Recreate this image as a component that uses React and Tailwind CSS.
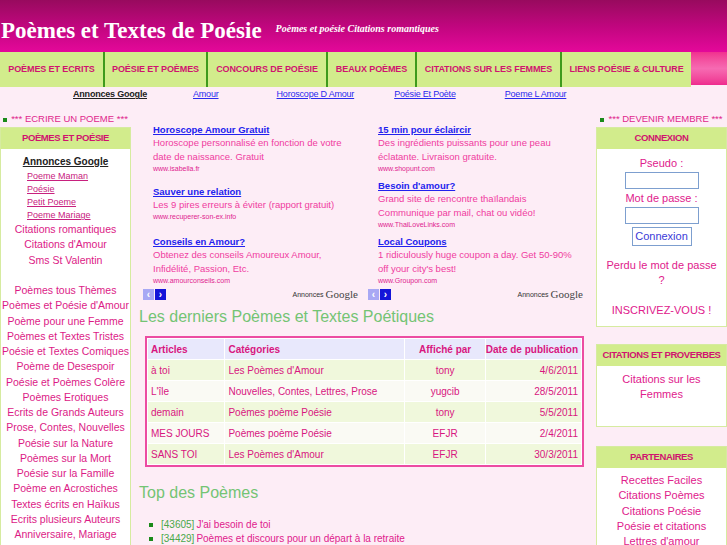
import React from "react";

const pink = "text-[#dc1a86]";

function Box({ title, children, className = "" }) {
  return (
    <div className={"border border-[#d6eba0] bg-white " + className}>
      <div className="h-[21px] bg-[#d2ec8c] flex items-center justify-center text-[9.5px] font-bold text-[#d0136f] tracking-[-0.4px] whitespace-nowrap">
        {title}
      </div>
      {children}
    </div>
  );
}

function Ad({ title, lines, url, mb }) {
  return (
    <div style={{ marginBottom: mb }}>
      <div className="text-[9.5px] font-bold text-[#2222ee] underline leading-[13px]">{title}</div>
      {lines.map((l, i) => (
        <div key={i} className="text-[9.5px] text-[#f03ca0] leading-[14px] whitespace-nowrap">{l}</div>
      ))}
      <div className="text-[7px] text-[#e0248f] leading-[9px]">{url}</div>
    </div>
  );
}

function AdUnit({ ads }) {
  return (
    <div className="w-[228px] flex flex-col">
      <div className="pl-[12px] pt-[11px] h-[177px]">
        {ads.map((a, i) => (
          <Ad key={i} {...a} />
        ))}
      </div>
      <div className="flex items-center justify-between pl-[2px] pr-[8px]">
        <div className="flex gap-[1px]">
          <div className="w-[11px] h-[11px] bg-[#a8a8f4] text-white text-[10px] font-bold flex items-center justify-center leading-none">‹</div>
          <div className="w-[11px] h-[11px] bg-[#1414d8] text-white text-[10px] font-bold flex items-center justify-center leading-none">›</div>
        </div>
        <div className="flex items-end gap-[2px]">
          <span className="text-[7px] text-[#333]">Annonces</span>
          <span className="text-[11px] text-[#444] font-['Liberation_Serif'] leading-[11px]">Google</span>
        </div>
      </div>
    </div>
  );
}

export default function App() {
  const nav = [
    ["POÈMES ET ECRITS", 103],
    ["POÉSIE ET POÈMES", 103],
    ["CONCOURS DE POÉSIE", 120],
    ["BEAUX POÈMES", 89],
    ["CITATIONS SUR LES FEMMES", 145],
    ["LIENS POÉSIE & CULTURE", 131],
  ];
  const leftLinks1 = ["Citations romantiques", "Citations d'Amour", "Sms St Valentin"];
  const leftLinks2 = [
    "Poèmes tous Thèmes",
    "Poèmes et Poésie d'Amour",
    "Poème pour une Femme",
    "Poèmes et Textes Tristes",
    "Poésie et Textes Comiques",
    "Poème de Desespoir",
    "Poésie et Poèmes Colère",
    "Poèmes Erotiques",
    "Ecrits de Grands Auteurs",
    "Prose, Contes, Nouvelles",
    "Poésie sur la Nature",
    "Poèmes sur la Mort",
    "Poésie sur la Famille",
    "Poème en Acrostiches",
    "Textes écrits en Haïkus",
    "Ecrits plusieurs Auteurs",
    "Anniversaire, Mariage",
  ];
  const rows = [
    ["à toi", "Les Poèmes d'Amour", "tony", "4/6/2011"],
    ["L'île", "Nouvelles, Contes, Lettres, Prose", "yugcib", "28/5/2011"],
    ["demain", "Poèmes poème Poésie", "tony", "5/5/2011"],
    ["MES JOURS", "Poèmes poème Poésie", "EFJR", "2/4/2011"],
    ["SANS TOI", "Les Poèmes d'Amour", "EFJR", "30/3/2011"],
  ];
  return (
    <div className="w-[727px] h-[545px] overflow-hidden bg-[#fdedf6] font-['Liberation_Sans',Arial,sans-serif]">
      {/* header */}
      <div className="h-[52px] bg-gradient-to-b from-[#980a5e] via-[#c0067e] to-[#e4089a] flex items-end pb-[9px]">
        <div className="text-white font-bold text-[23px] leading-[24px] font-['Liberation_Serif',serif] pl-[1px] whitespace-nowrap">
          Poèmes et Textes de Poésie
        </div>
        <div className="text-white font-bold italic text-[10px] font-['Liberation_Serif',serif] ml-[14px] mb-[7px] whitespace-nowrap">
          Poèmes et poésie Citations romantiques
        </div>
      </div>
      {/* nav */}
      <div className="h-[35px] flex">
        {nav.map(([t, w]) => (
          <div
            key={t}
            style={{ width: w }}
            className="h-full bg-[#d2ec8c] border-l-2 border-[#3e9a1c] first:border-l-0 flex items-center justify-center text-[9px] font-bold text-[#d0136f] tracking-[-0.1px] whitespace-nowrap"
          >
            {t}
          </div>
        ))}
        <div className="flex-1 h-[33px] bg-gradient-to-b from-[#f0308f] via-[#f66ab2] to-[#ee2a8e]"></div>
      </div>
      {/* ad links */}
      <div className="h-[16px] flex items-center text-[9px] tracking-[-0.2px]">
        <span className="ml-[73px] font-bold underline text-[#222]">Annonces Google</span>
        <span className="ml-[46px] underline text-[#2a2aee]">Amour</span>
        <span className="ml-[58px] underline text-[#2a2aee]">Horoscope D Amour</span>
        <span className="ml-[40px] underline text-[#2a2aee]">Poésie Et Poète</span>
        <span className="ml-[49px] underline text-[#2a2aee]">Poeme L Amour</span>
      </div>
      {/* body */}
      <div className="flex mt-[9px]">
        {/* left */}
        <div className="w-[131px] shrink-0">
          <div className="h-[15px] flex items-center justify-center text-[9.5px] text-[#e0268c] gap-[4px] whitespace-nowrap">
            <span className="w-[4px] h-[4px] bg-[#1a8a1a] inline-block"></span>
            *** ECRIRE UN POEME ***
          </div>
          <Box title="POÈMES ET POÉSIE">
            <div className="pt-[6px] pb-[10px]">
              <div className="text-center text-[10px] font-bold underline text-[#222] leading-[14px]">Annonces Google</div>
              <div className="pl-[26px] mt-[1px]">
                {["Poeme Maman", "Poésie", "Petit Poeme", "Poeme Mariage"].map((t) => (
                  <div key={t} className="text-[9px] underline text-[#c8207e] leading-[13px]">{t}</div>
                ))}
              </div>
              <div className="text-center">
                {leftLinks1.map((t) => (
                  <div key={t} className={"text-[10.5px] leading-[15.25px] " + pink}>{t}</div>
                ))}
                <div className="h-[15.25px]"></div>
                {leftLinks2.map((t) => (
                  <div key={t} className={"text-[10.5px] leading-[15.25px] whitespace-nowrap " + pink}>{t}</div>
                ))}
              </div>
            </div>
          </Box>
        </div>
        {/* center */}
        <div className="w-[455px] shrink-0 ml-[5px]">
          <div className="flex pl-[5px]">
            <AdUnit
              ads={[
                { title: "Horoscope Amour Gratuit", lines: ["Horoscope personnalisé en fonction de votre", "date de naissance. Gratuit"], url: "www.isabella.fr", mb: 12 },
                { title: "Sauver une relation", lines: ["Les 9 pires erreurs à éviter (rapport gratuit)"], url: "www.recuperer-son-ex.info", mb: 14 },
                { title: "Conseils en Amour?", lines: ["Obtenez des conseils Amoureux Amour,", "Infidélité, Passion, Etc."], url: "www.amourconseils.com", mb: 0 },
              ]}
            />
            <AdUnit
              ads={[
                { title: "15 min pour éclaircir", lines: ["Des ingrédients puissants pour une peau", "éclatante. Livraison gratuite."], url: "www.shopunt.com", mb: 6 },
                { title: "Besoin d'amour?", lines: ["Grand site de rencontre thaïlandais", "Communique par mail, chat ou vidéo!"], url: "www.ThaiLoveLinks.com", mb: 6 },
                { title: "Local Coupons", lines: ["1 ridiculously huge coupon a day. Get 50-90%", "off your city's best!"], url: "www.Groupon.com", mb: 0 },
              ]}
            />
          </div>
          <div className="text-[16px] text-[#74c474] mt-[7px] pl-[3px] leading-[20px] whitespace-nowrap">Les derniers Poèmes et Textes Poétiques</div>
          <div className="ml-[9px] mt-[9px] w-[439px] border-2 border-[#ec4ca2] bg-white">
            <table className="w-full border-separate border-spacing-[1px] text-[10px] text-[#d8167f]">
              <thead>
                <tr className="bg-[#e8e8fc] h-[20px]">
                  <th className="text-left font-bold pl-[3px] w-[77px]">Articles</th>
                  <th className="text-left font-bold pl-[3px] w-[181px]">Catégories</th>
                  <th className="text-center font-bold w-[80px]">Affiché par</th>
                  <th className="text-right font-bold pr-[3px] whitespace-nowrap">Date de publication</th>
                </tr>
              </thead>
              <tbody>
                {rows.map((r, i) => (
                  <tr key={i} className={(i % 2 === 0 ? "bg-[#f0f8dc]" : "bg-[#fafaf4]") + " h-[20px]"}>
                    <td className="pl-[3px]">{r[0]}</td>
                    <td className="pl-[3px]">{r[1]}</td>
                    <td className="text-center">{r[2]}</td>
                    <td className="text-right pr-[3px]">{r[3]}</td>
                  </tr>
                ))}
              </tbody>
            </table>
          </div>
          <div className="text-[16px] text-[#74c474] mt-[16px] pl-[3px] leading-[20px]">Top des Poèmes</div>
          <ul className="mt-[15px] pl-[13px] text-[10px] leading-[14px]">
            <li className="flex items-center">
              <span className="w-[4px] h-[4px] bg-[#1a8a1a] mr-[8px]"></span>
              <span className="text-[#4aa84a]">[43605]</span>
              <span className="text-[#e0208c] ml-[2px]">J'ai besoin de toi</span>
            </li>
            <li className="flex items-center">
              <span className="w-[4px] h-[4px] bg-[#1a8a1a] mr-[8px]"></span>
              <span className="text-[#4aa84a]">[34429]</span>
              <span className="text-[#e0208c] ml-[2px]">Poèmes et discours pour un départ à la retraite</span>
            </li>
          </ul>
        </div>
        {/* right */}
        <div className="w-[131px] shrink-0 ml-[5px]">
          <div className="h-[15px] flex items-center justify-center text-[9.5px] text-[#e0268c] gap-[4px] whitespace-nowrap">
            <span className="w-[4px] h-[4px] bg-[#1a8a1a] inline-block"></span>
            *** DEVENIR MEMBRE ***
          </div>
          <Box title="CONNEXION">
            <div className="flex flex-col items-center pt-[7px] pb-[8px] text-[11px] text-[#e0208c]">
              <div className="leading-[15px]">Pseudo :</div>
              <div className="w-[74px] h-[17px] border border-[#7d9fcf] bg-white mt-[1px]"></div>
              <div className="leading-[15px] mt-[2px]">Mot de passe :</div>
              <div className="w-[74px] h-[17px] border border-[#7d9fcf] bg-white mt-[1px]"></div>
              <div className="mt-[3px] w-[60px] h-[19px] border border-[#7d9fcf] bg-white flex items-center justify-center text-[#3a3ad8]">
                Connexion
              </div>
              <div className="mt-[12px] leading-[15px] text-center">Perdu le mot de passe</div>
              <div className="leading-[15px]">?</div>
              <div className="mt-[15px] leading-[15px]">INSCRIVEZ-VOUS !</div>
            </div>
          </Box>
          <Box title="CITATIONS ET PROVERBES" className="mt-[17px]">
            <div className="h-[60px] pt-[6px] text-center text-[11px] leading-[15px] text-[#e0208c]">
              <div>Citations sur les</div>
              <div>Femmes</div>
            </div>
          </Box>
          <Box title="PARTENAIRES" className="mt-[19px]">
            <div className="pt-[5px] text-center text-[11px] leading-[15.3px] text-[#e0208c]">
              {["Recettes Faciles", "Citations Poèmes", "Citations Poésie", "Poésie et citations", "Lettres d'amour", "Poèmes"].map((t) => (
                <div key={t}>{t}</div>
              ))}
            </div>
          </Box>
        </div>
      </div>
    </div>
  );
}
